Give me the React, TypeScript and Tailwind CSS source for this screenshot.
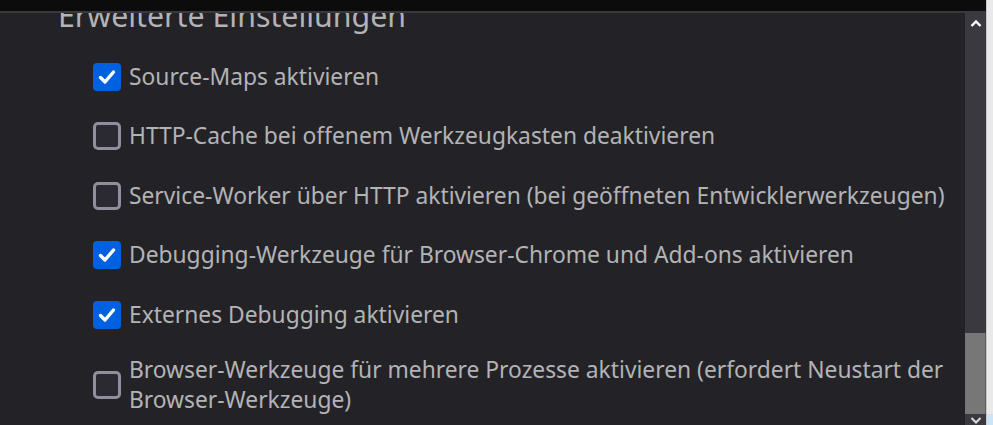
const items = [
  { label: "Source-Maps aktivieren", checked: true },
  { label: "HTTP-Cache bei offenem Werkzeugkasten deaktivieren", checked: false },
  {
    label:
      "Service-Worker über HTTP aktivieren (bei geöffneten Entwicklerwerkzeugen)",
    checked: false,
  },
  {
    label: "Debugging-Werkzeuge für Browser-Chrome und Add-ons aktivieren",
    checked: true,
  },
  { label: "Externes Debugging aktivieren", checked: true },
];

function Box({ checked }: { checked: boolean }) {
  if (checked) {
    return (
      <div className="w-[28px] h-[28px] shrink-0 rounded-[4px] bg-[#0061e0] flex items-center justify-center">
        <svg width="20" height="20" viewBox="0 0 20 20">
          <path
            d="M3.5 10.5 L8 15 L16.5 5"
            fill="none"
            stroke="#fff"
            strokeWidth="3.4"
            strokeLinecap="round"
            strokeLinejoin="round"
          />
        </svg>
      </div>
    );
  }
  return (
    <div className="w-[28px] h-[28px] shrink-0 rounded-[5px] border-[3px] border-[#8f8f9d] bg-[#2b2a33]" />
  );
}

export default function App() {
  return (
    <div className="w-[993px] h-[425px] flex overflow-hidden bg-[#0c0c0d] font-['Noto_Sans',sans-serif]">
      <div className="w-[986px] flex flex-col">
        <div className="h-[11px] shrink-0 bg-[#0c0c0d]" />
        <div className="flex flex-1 min-h-0">
          <div className="flex-1 flex flex-col min-w-0 overflow-hidden">
            <div className="h-[2px] shrink-0 bg-[#38383d]" />
            <div className="flex-1 bg-[#232327] overflow-hidden text-[#b3b3b5]">
              <h2 className="pl-[58px] mt-[-15px] text-[30.3px] leading-[36px]">
                Erweiterte Einstellungen
              </h2>
              <div className="pl-[93px] pt-[27.5px] flex flex-col gap-[29.5px] text-[22.8px] leading-[30px]">
                {items.map((it) => (
                  <label key={it.label} className="flex items-center gap-[8px]">
                    <Box checked={it.checked} />
                    <span className="whitespace-nowrap">{it.label}</span>
                  </label>
                ))}
                <label className="flex items-center gap-[8px] mt-[-4.5px] pr-[20px]">
                  <Box checked={false} />
                  <span>
                    Browser-Werkzeuge für mehrere Prozesse aktivieren (erfordert
                    Neustart der Browser-Werkzeuge)
                  </span>
                </label>
              </div>
            </div>
          </div>
          <div className="w-[21px] shrink-0 bg-[#3a393f] flex flex-col">
            <div className="h-[24px] flex items-center justify-center">
              <svg width="12" height="9" viewBox="0 0 12 9">
                <path d="M1.5 7 L6 2.5 L10.5 7" fill="none" stroke="#fff" strokeWidth="2.4" />
              </svg>
            </div>
            <div className="h-[298px]" />
            <div className="h-[81px] bg-[#777777] border-r border-[#5d5d5d]" />
            <div className="flex-1 flex items-end justify-center">
              <svg width="12" height="9" viewBox="0 0 12 9">
                <path d="M1.5 2 L6 6.5 L10.5 2" fill="none" stroke="#ddd" strokeWidth="2" />
              </svg>
            </div>
          </div>
        </div>
      </div>
      <div className="w-[7px] flex flex-col bg-[#e9e9e9] border-l border-[#c8c8c8]">
        <div className="flex-1" />
        <div className="h-[11px] bg-[#cde4f7]" />
      </div>
    </div>
  );
}
